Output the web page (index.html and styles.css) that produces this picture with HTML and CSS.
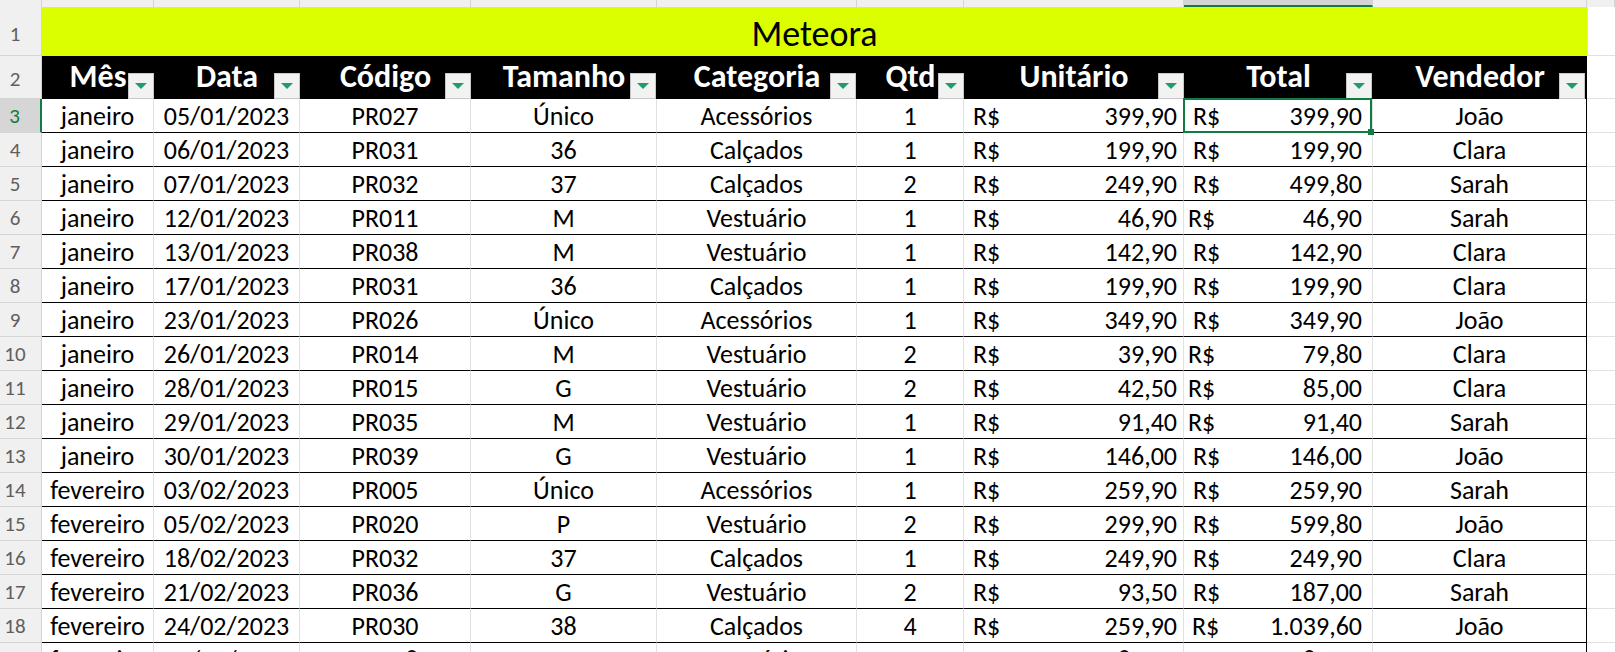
FILE: index.html
```html
<!DOCTYPE html>
<html lang="pt-BR">
<head>
<meta charset="utf-8">
<title>Meteora</title>
<link rel="stylesheet" href="styles.css">
</head>
<body>
<div class="sheet">
  <div class="row strip">
    <div class="ch corner"></div>
    <div class="ch"></div><div class="ch"></div><div class="ch"></div><div class="ch"></div><div class="ch"></div>
    <div class="ch"></div><div class="ch"></div><div class="ch sel"></div><div class="ch"></div><div class="ch"></div>
  </div>

  <div class="row r1">
    <div class="rh">1</div>
    <div class="title">Meteora</div>
    <div class="ext"></div>
  </div>

  <div class="row r2">
    <div class="rh">2</div>
    <div class="hd">Mês<span class="flt"></span></div>
    <div class="hd">Data<span class="flt"></span></div>
    <div class="hd">Código<span class="flt"></span></div>
    <div class="hd">Tamanho<span class="flt f1"></span></div>
    <div class="hd">Categoria<span class="flt f1"></span></div>
    <div class="hd">Qtd<span class="flt"></span></div>
    <div class="hd">Unitário<span class="flt"></span></div>
    <div class="hd">Total<span class="flt f1"></span></div>
    <div class="hd">Vendedor<span class="flt f2"></span></div>
    <div class="ext"></div>
  </div>

  <div class="row dr">
    <div class="rh active">3</div>
    <div class="c">janeiro</div><div class="c">05/01/2023</div><div class="c">PR027</div><div class="c">Único</div><div class="c">Acessórios</div><div class="c">1</div>
    <div class="c acc"><span>R$</span><span>399,90</span></div>
    <div class="c acc tot selected"><span>R$</span><span>399,90</span><i class="handle"></i></div>
    <div class="c last">João</div><div class="ext"></div>
  </div>
  <div class="row dr">
    <div class="rh">4</div>
    <div class="c">janeiro</div><div class="c">06/01/2023</div><div class="c">PR031</div><div class="c">36</div><div class="c">Calçados</div><div class="c">1</div>
    <div class="c acc"><span>R$</span><span>199,90</span></div>
    <div class="c acc tot"><span>R$</span><span>199,90</span></div>
    <div class="c last">Clara</div><div class="ext"></div>
  </div>
  <div class="row dr">
    <div class="rh">5</div>
    <div class="c">janeiro</div><div class="c">07/01/2023</div><div class="c">PR032</div><div class="c">37</div><div class="c">Calçados</div><div class="c">2</div>
    <div class="c acc"><span>R$</span><span>249,90</span></div>
    <div class="c acc tot"><span>R$</span><span>499,80</span></div>
    <div class="c last">Sarah</div><div class="ext"></div>
  </div>
  <div class="row dr">
    <div class="rh">6</div>
    <div class="c">janeiro</div><div class="c">12/01/2023</div><div class="c">PR011</div><div class="c">M</div><div class="c">Vestuário</div><div class="c">1</div>
    <div class="c acc"><span>R$</span><span>46,90</span></div>
    <div class="c acc tot short"><span>R$</span><span>46,90</span></div>
    <div class="c last">Sarah</div><div class="ext"></div>
  </div>
  <div class="row dr">
    <div class="rh">7</div>
    <div class="c">janeiro</div><div class="c">13/01/2023</div><div class="c">PR038</div><div class="c">M</div><div class="c">Vestuário</div><div class="c">1</div>
    <div class="c acc"><span>R$</span><span>142,90</span></div>
    <div class="c acc tot"><span>R$</span><span>142,90</span></div>
    <div class="c last">Clara</div><div class="ext"></div>
  </div>
  <div class="row dr">
    <div class="rh">8</div>
    <div class="c">janeiro</div><div class="c">17/01/2023</div><div class="c">PR031</div><div class="c">36</div><div class="c">Calçados</div><div class="c">1</div>
    <div class="c acc"><span>R$</span><span>199,90</span></div>
    <div class="c acc tot"><span>R$</span><span>199,90</span></div>
    <div class="c last">Clara</div><div class="ext"></div>
  </div>
  <div class="row dr">
    <div class="rh">9</div>
    <div class="c">janeiro</div><div class="c">23/01/2023</div><div class="c">PR026</div><div class="c">Único</div><div class="c">Acessórios</div><div class="c">1</div>
    <div class="c acc"><span>R$</span><span>349,90</span></div>
    <div class="c acc tot"><span>R$</span><span>349,90</span></div>
    <div class="c last">João</div><div class="ext"></div>
  </div>
  <div class="row dr">
    <div class="rh">10</div>
    <div class="c">janeiro</div><div class="c">26/01/2023</div><div class="c">PR014</div><div class="c">M</div><div class="c">Vestuário</div><div class="c">2</div>
    <div class="c acc"><span>R$</span><span>39,90</span></div>
    <div class="c acc tot short"><span>R$</span><span>79,80</span></div>
    <div class="c last">Clara</div><div class="ext"></div>
  </div>
  <div class="row dr">
    <div class="rh">11</div>
    <div class="c">janeiro</div><div class="c">28/01/2023</div><div class="c">PR015</div><div class="c">G</div><div class="c">Vestuário</div><div class="c">2</div>
    <div class="c acc"><span>R$</span><span>42,50</span></div>
    <div class="c acc tot short"><span>R$</span><span>85,00</span></div>
    <div class="c last">Clara</div><div class="ext"></div>
  </div>
  <div class="row dr">
    <div class="rh">12</div>
    <div class="c">janeiro</div><div class="c">29/01/2023</div><div class="c">PR035</div><div class="c">M</div><div class="c">Vestuário</div><div class="c">1</div>
    <div class="c acc"><span>R$</span><span>91,40</span></div>
    <div class="c acc tot short"><span>R$</span><span>91,40</span></div>
    <div class="c last">Sarah</div><div class="ext"></div>
  </div>
  <div class="row dr">
    <div class="rh">13</div>
    <div class="c">janeiro</div><div class="c">30/01/2023</div><div class="c">PR039</div><div class="c">G</div><div class="c">Vestuário</div><div class="c">1</div>
    <div class="c acc"><span>R$</span><span>146,00</span></div>
    <div class="c acc tot"><span>R$</span><span>146,00</span></div>
    <div class="c last">João</div><div class="ext"></div>
  </div>
  <div class="row dr">
    <div class="rh">14</div>
    <div class="c">fevereiro</div><div class="c">03/02/2023</div><div class="c">PR005</div><div class="c">Único</div><div class="c">Acessórios</div><div class="c">1</div>
    <div class="c acc"><span>R$</span><span>259,90</span></div>
    <div class="c acc tot"><span>R$</span><span>259,90</span></div>
    <div class="c last">Sarah</div><div class="ext"></div>
  </div>
  <div class="row dr">
    <div class="rh">15</div>
    <div class="c">fevereiro</div><div class="c">05/02/2023</div><div class="c">PR020</div><div class="c">P</div><div class="c">Vestuário</div><div class="c">2</div>
    <div class="c acc"><span>R$</span><span>299,90</span></div>
    <div class="c acc tot"><span>R$</span><span>599,80</span></div>
    <div class="c last">João</div><div class="ext"></div>
  </div>
  <div class="row dr">
    <div class="rh">16</div>
    <div class="c">fevereiro</div><div class="c">18/02/2023</div><div class="c">PR032</div><div class="c">37</div><div class="c">Calçados</div><div class="c">1</div>
    <div class="c acc"><span>R$</span><span>249,90</span></div>
    <div class="c acc tot"><span>R$</span><span>249,90</span></div>
    <div class="c last">Clara</div><div class="ext"></div>
  </div>
  <div class="row dr">
    <div class="rh">17</div>
    <div class="c">fevereiro</div><div class="c">21/02/2023</div><div class="c">PR036</div><div class="c">G</div><div class="c">Vestuário</div><div class="c">2</div>
    <div class="c acc"><span>R$</span><span>93,50</span></div>
    <div class="c acc tot"><span>R$</span><span>187,00</span></div>
    <div class="c last">Sarah</div><div class="ext"></div>
  </div>
  <div class="row dr">
    <div class="rh">18</div>
    <div class="c">fevereiro</div><div class="c">24/02/2023</div><div class="c">PR030</div><div class="c">38</div><div class="c">Calçados</div><div class="c">4</div>
    <div class="c acc"><span>R$</span><span>259,90</span></div>
    <div class="c acc tot mid"><span>R$</span><span>1.039,60</span></div>
    <div class="c last">João</div><div class="ext"></div>
  </div>
  <div class="row dr">
    <div class="rh">19</div>
    <div class="c">fevereiro</div><div class="c">25/02/2023</div><div class="c">PR028</div><div class="c">P</div><div class="c">Acessórios</div><div class="c">1</div>
    <div class="c acc"><span>R$</span><span>189,90</span></div>
    <div class="c acc tot"><span>R$</span><span>189,90</span></div>
    <div class="c last">João</div><div class="ext"></div>
  </div>
</div>
</body>
</html>
```

FILE: styles.css
```css
* { box-sizing: border-box; margin: 0; padding: 0; }
html, body { width: 1615px; height: 652px; overflow: hidden; background: #ffffff; }
body { font-family: Carlito, Calibri, Lato, "Liberation Sans", sans-serif; color: #000; }

.sheet { display: flex; flex-direction: column; }

.row {
  display: grid;
  grid-template-columns: 42px 112px 146px 171px 186px 200px 107px 220px 189px 214px 28px;
}

/* column header strip */
.strip { height: 7px; }
.ch { background: #f0f0f0; border-right: 1px solid #d4d4d4; }
.ch.corner { background: #f0f0f0; }
.ch.sel { background: #d5d5d5; border-bottom: 2px solid #107c41; }

/* row headers */
.rh {
  background: #f0f0f0;
  border-right: 1px solid #d4d4d4;
  border-bottom: 1px solid #d4d4d4;
  color: #5f5f5f;
  font-size: 21px;
  line-height: 22px;
  padding-right: 11px;
  display: flex;
  align-items: center;
  justify-content: center;
}
.r1 .rh { padding-top: 5px; }
.r2 .rh { padding-top: 4px; }
.rh.active {
  background: #d6d6d6;
  color: #107c41;
  border-right: 2px solid #107c41;
}

.ext { border-bottom: 1px solid #e1e1e1; }

/* title */
.r1 { height: 49px; }
.title {
  grid-column: 2 / 11;
  background: #dcff00;
  font-size: 36px;
  line-height: 36px;
  padding-top: 9px;
  text-align: center;
}
.r1 .ext { border-left: 1px solid #e1e1e1; }

/* header row */
.r2 { height: 43px; }
.hd {
  position: relative;
  background: #000;
  color: #fff;
  font-weight: bold;
  font-size: 32px;
  line-height: 32px;
  padding-top: 5px;
  text-align: center;
  white-space: nowrap;
}
.flt {
  position: absolute;
  right: 0;
  bottom: 0;
  width: 26px;
  height: 26px;
  background: #f2f2f2;
  border: 1px solid #c8c8c8;
}
.flt.f1 { right: 1px; }
.flt.f2 { right: 2px; }
.flt::after {
  content: "";
  position: absolute;
  left: 6px;
  top: 9px;
  border-left: 6px solid transparent;
  border-right: 6px solid transparent;
  border-top: 6px solid #1f9c68;
}

/* data rows */
.dr { height: 34px; }
.c {
  border-bottom: 1px solid #000;
  border-right: 1px solid #e1e1e1;
  font-size: 26px;
  line-height: 26px;
  padding-top: 4px;
  text-align: center;
  white-space: nowrap;
}
.c.last { border-right: 1px solid #000; }
.acc {
  display: flex;
  justify-content: space-between;
  padding-left: 9px;
  padding-right: 6px;
}
.acc.tot { padding-left: 9px; padding-right: 10px; }
.acc.tot.short { padding-left: 4px; }
.acc.tot.mid { padding-left: 8px; }

.selected { position: relative; }
.selected::after {
  content: "";
  position: absolute;
  left: -1px;
  top: -1px;
  right: 0;
  bottom: -1px;
  border: 2px solid #107c41;
}
.handle {
  position: absolute;
  right: -2px;
  bottom: -3px;
  width: 6px;
  height: 6px;
  background: #107c41;
  z-index: 2;
}
```
